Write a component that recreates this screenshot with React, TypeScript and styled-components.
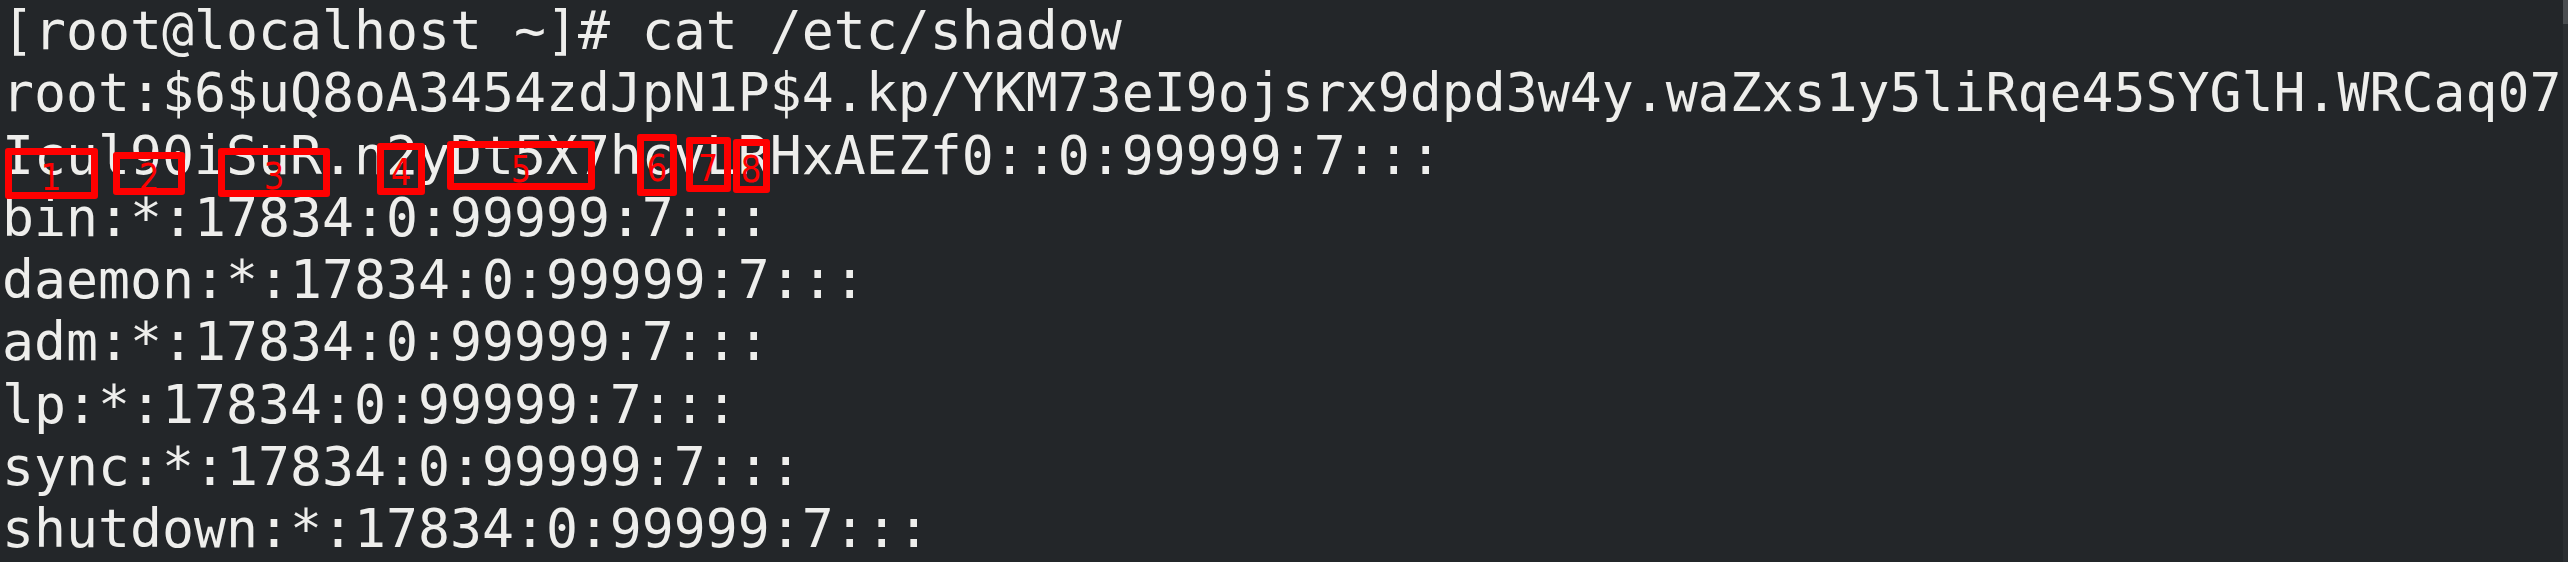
import React from "react";
import styled, { createGlobalStyle } from "styled-components";

const Global = createGlobalStyle`
  html, body { margin: 0; padding: 0; background: #232629; }
  body { width: 2568px; height: 562px; overflow: hidden; }
`;

const Window = styled.div`
  display: flex;
  width: 2568px;
  height: 562px;
  background: #232629;
  overflow: hidden;
`;

const Terminal = styled.div`
  position: relative;
  flex: 1;
  padding-left: 2px;
`;

const Line = styled.div`
  font-family: "DejaVu Sans Mono", monospace;
  font-size: 53.15px;
  line-height: 62.3px;
  height: 62.3px;
  color: #eeeeec;
  white-space: pre;
`;

const Scrollbar = styled.div`
  width: 5px;
  background: #2b2e31;
  display: flex;
  flex-direction: column;
`;

const Thumb = styled.div`
  height: 24px;
  background: #4a4d50;
`;

const Mark = styled.div<{ $x: number; $y: number; $w: number; $h: number }>`
  position: absolute;
  left: ${(p) => p.$x}px;
  top: ${(p) => p.$y}px;
  width: ${(p) => p.$w}px;
  height: ${(p) => p.$h}px;
  box-sizing: border-box;
  border: 7px solid #ff0000;
  border-radius: 3px;
  display: flex;
  align-items: center;
  justify-content: center;
  padding-top: 6px;
  overflow: visible;
  font-family: "DejaVu Sans", sans-serif;
  font-size: 38px;
  line-height: 1;
  color: #ff0000;
`;

const Num = styled.span`
  display: inline-block;
  transform: scaleX(0.85);
`;

const lines = [
  "[root@localhost ~]# cat /etc/shadow",
  "root:$6$uQ8oA3454zdJpN1P$4.kp/YKM73eI9ojsrx9dpd3w4y.waZxs1y5liRqe45SYGlH.WRCaq07",
  "Icul90iSuR.n2yDt5X7hcvLRHxAEZf0::0:99999:7:::",
  "bin:*:17834:0:99999:7:::",
  "daemon:*:17834:0:99999:7:::",
  "adm:*:17834:0:99999:7:::",
  "lp:*:17834:0:99999:7:::",
  "sync:*:17834:0:99999:7:::",
  "shutdown:*:17834:0:99999:7:::",
];

const marks = [
  { n: "1", x: 5, y: 148, w: 93, h: 51 },
  { n: "2", x: 113, y: 152, w: 72, h: 43 },
  { n: "3", x: 218, y: 148, w: 112, h: 49 },
  { n: "4", x: 377, y: 143, w: 48, h: 52 },
  { n: "5", x: 447, y: 141, w: 148, h: 49 },
  { n: "6", x: 637, y: 134, w: 40, h: 62 },
  { n: "7", x: 686, y: 137, w: 45, h: 55 },
  { n: "8", x: 733, y: 139, w: 37, h: 54 },
];

export default function App() {
  return (
    <>
      <Global />
      <Window>
        <Terminal>
          {lines.map((l, i) => (
            <Line key={i}>{l}</Line>
          ))}
          {marks.map((m) => (
            <Mark key={m.n} $x={m.x} $y={m.y} $w={m.w} $h={m.h}>
              <Num>{m.n}</Num>
            </Mark>
          ))}
        </Terminal>
        <Scrollbar>
          <Thumb />
        </Scrollbar>
      </Window>
    </>
  );
}
